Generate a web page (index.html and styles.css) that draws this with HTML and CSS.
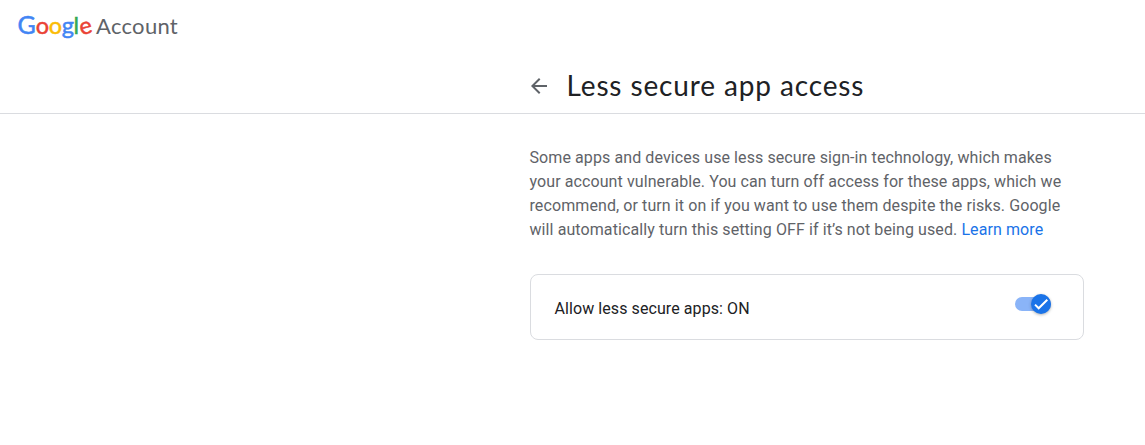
FILE: index.html
```html
<!DOCTYPE html>
<html lang="en">
<head>
<meta charset="utf-8">
<title>Less secure app access</title>
<link rel="stylesheet" href="styles.css">
</head>
<body>
<header class="topbar">
  <a class="brand"><span class="logo"><span class="blue big">G</span><span class="red">o</span><span class="yellow">o</span><span class="blue">g</span><span class="green">l</span><span class="red tilt">e</span></span><span class="product">Account</span></a>
</header>
<div class="titlebar">
  <svg class="back" viewBox="0 0 24 24" width="24" height="24"><path d="M20 11H7.83l5.59-5.59L12 4l-8 8 8 8 1.41-1.41L7.83 13H20v-2z"/></svg>
  <h1 class="title">Less secure app access</h1>
</div>
<main class="content">
  <p class="intro">Some apps and devices use less secure sign-in technology, which makes<br>your account vulnerable. You can turn off access for these apps, which we<br>recommend, or turn it on if you want to use them despite the risks. Google<br>will automatically turn this setting OFF if it’s not being used. <a class="link">Learn more</a></p>
  <section class="card">
    <span class="label">Allow less secure apps: ON</span>
    <span class="switch"><span class="thumb"><svg viewBox="0 0 20 20" width="20" height="20"><path d="M4 10.6l3.7 3.7 8.6-8.6"/></svg></span></span>
  </section>
</main>
</body>
</html>
```
FILE: styles.css
```css
* { box-sizing: border-box; }
body { margin: 0; height: 445px; overflow: hidden; background: #fff; font-family: Roboto, sans-serif; color: #202124; }
.topbar { height: 58px; padding: 7px 0 0 17.5px; }
.brand { display: flex; align-items: baseline; height: 34px; line-height: 34px; }
.logo { width: 78.5px; font: 400 23.5px/34px Lato, sans-serif; letter-spacing: -0.35px; -webkit-text-stroke: 0.5px currentColor; }
.big { font-size: 25px; letter-spacing: 0; }
.blue { color: #4285f4; }
.red { color: #ea4335; }
.yellow { color: #fbbc05; }
.green { color: #34a853; }
.tilt { display: inline-block; transform: rotate(-14deg); }
.product { font: 400 22px/34px Lato, sans-serif; letter-spacing: 0.3px; color: #5f6368; }
.titlebar { display: flex; align-items: center; height: 56px; padding-left: 527px; border-bottom: 1px solid #dadce0; }
.back { margin-left: -0.5px; fill: #5f6368; }
.title { margin: -2px 0 0 16px; font: 400 28px/36px Lato, sans-serif; letter-spacing: 0.87px; white-space: nowrap; }
.content { width: 554px; margin-left: 530px; padding-top: 32px; }
.intro { margin: 0 0 0 -0.5px; font-size: 16px; line-height: 24px; letter-spacing: 0.093px; color: #5f6368; white-space: nowrap; }
.link { color: #1a73e8; }
.card { display: flex; align-items: center; justify-content: space-between; height: 66px; margin-top: 32px; padding: 0 32px 0 23.5px; border: 1px solid #dadce0; border-radius: 8px; }
.label { font-size: 16px; line-height: 24px; letter-spacing: 0.08px; padding-top: 4px; }
.switch { display: flex; justify-content: flex-end; align-items: center; width: 36px; height: 14px; margin-bottom: 7px; border-radius: 7px; background: #8ab4f8; }
.thumb { width: 20px; height: 20px; border-radius: 50%; background: #1a73e8; box-shadow: 0 1px 3px rgba(60, 64, 67, 0.4); }
.thumb svg { display: block; fill: none; stroke: #fff; stroke-width: 2; }
```
